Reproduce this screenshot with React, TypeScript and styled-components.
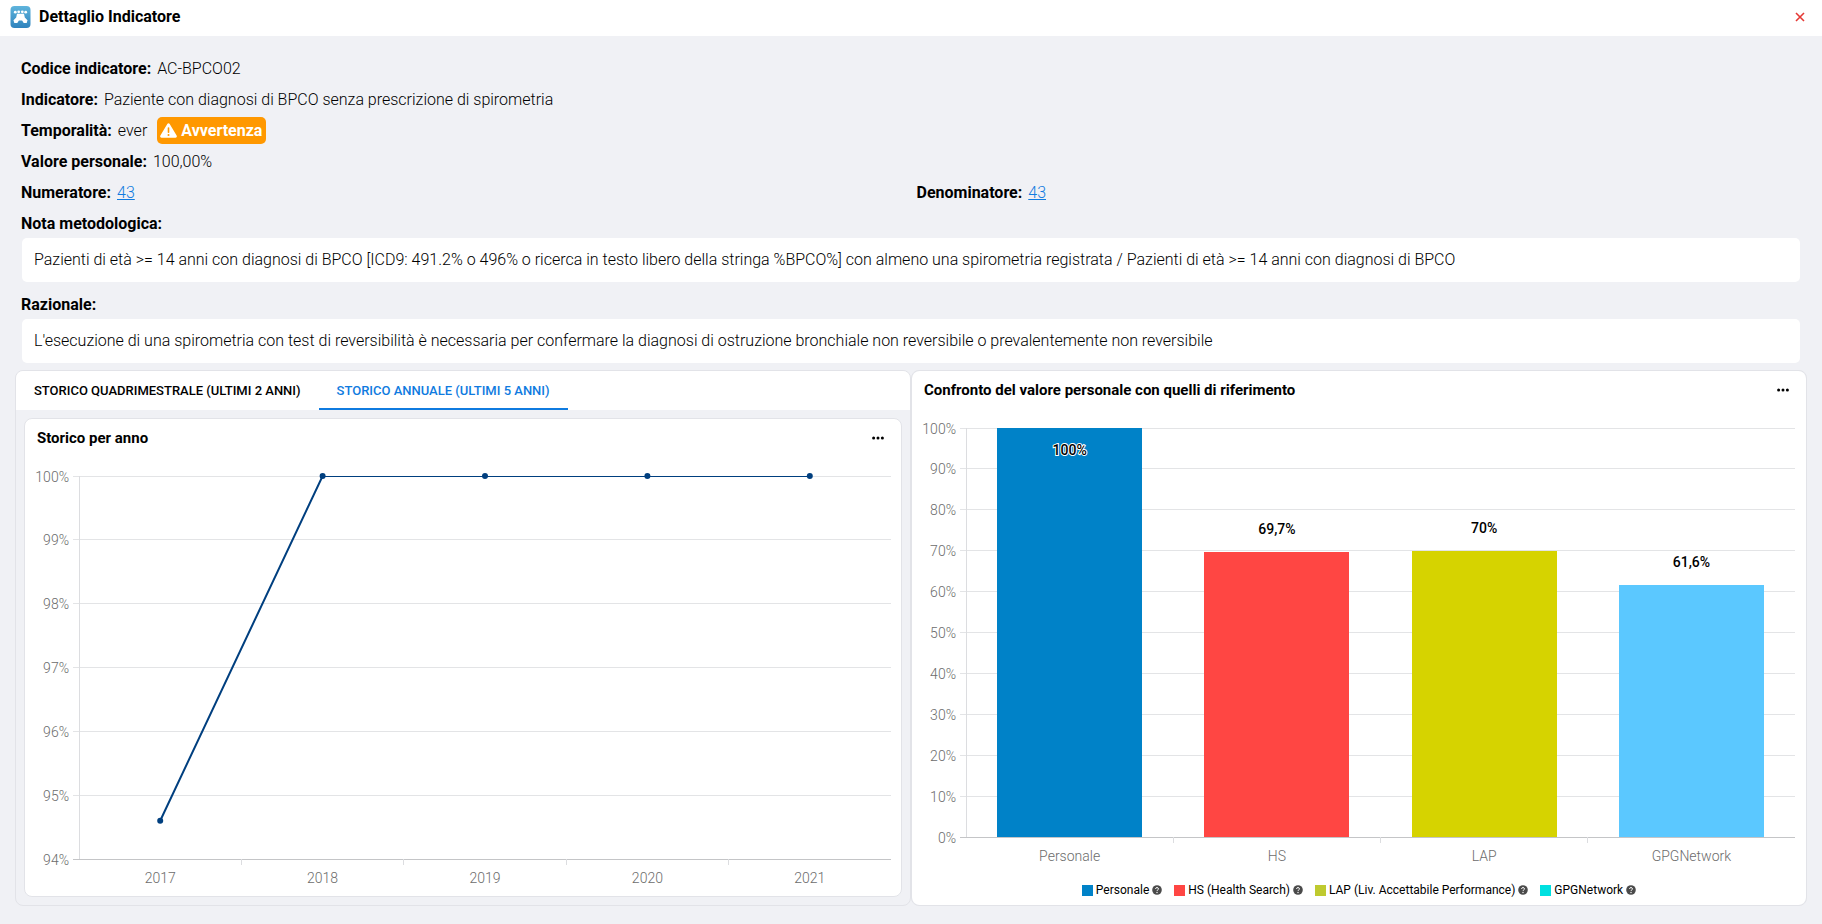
import React, { useLayoutEffect, useRef, useState } from "react";
import styled, { createGlobalStyle } from "styled-components";

const GlobalStyle = createGlobalStyle`
  *, *::before, *::after { box-sizing: border-box; }
  body {
    margin: 0;
    background: #f0f1f5;
    color: #000;
    font-family: Roboto, "Liberation Sans", sans-serif;
    font-size: 16px;
  }
`;

const Dialog = styled.section`
  display: flex;
  flex-direction: column;
  min-height: 100vh;
  background: #f0f1f5;
`;

const Header = styled.header`
  display: flex;
  align-items: center;
  gap: 8px;
  height: 36px;
  padding: 0 16px 3px 10px;
  background: #fff;
`;

const Title = styled.h1`
  flex: 1;
  margin: 0;
  font-size: 16px;
  font-weight: 700;
  line-height: 20px;
`;

const IconButton = styled.button<{ $color?: string }>`
  display: flex;
  padding: 0;
  border: 0;
  background: none;
  color: ${(p) => p.$color ?? "#000"};
  cursor: pointer;
`;

const Content = styled.main`
  display: flex;
  flex-direction: column;
  padding: 16px 15px;
`;

const Details = styled.div`
  display: flex;
  flex-direction: column;
  padding: 0 7px 0 6px;
`;

const Row = styled.div`
  display: grid;
  grid-template-columns: 1fr 1fr;
  column-gap: 12px;
`;

const Field = styled.div`
  display: flex;
  align-items: center;
  gap: 6px;
  height: 31px;
  padding-top: 2px;
  font-weight: 300;
`;

const Label = styled.span`
  font-weight: 700;
`;

const Link = styled.a`
  color: #0f7be0;
  text-decoration: underline;
`;

const Tag = styled.span`
  display: flex;
  align-items: center;
  gap: 4px;
  height: 27px;
  margin-left: 4px;
  padding: 0 4px 0 3px;
  border-radius: 5px;
  background: #ff9800;
  color: #fff;
  font-weight: 700;
`;

const Note = styled.p`
  margin: 0 0 6px 1px;
  padding: 10px 12px;
  border-radius: 5px;
  background: #fff;
  font-weight: 300;
  line-height: 24px;
`;

const Panels = styled.div`
  display: grid;
  grid-template-columns: 1fr 1fr;
  margin-top: 1px;
`;

const Panel = styled.section`
  display: flex;
  flex-direction: column;
  min-width: 0;
  border: 1px solid #e2e3e8;
  border-radius: 8px;
  overflow: hidden;
`;

const Tabs = styled.div`
  display: flex;
  height: 39px;
  background: #fff;
`;

const Tab = styled.button<{ $active?: boolean }>`
  padding: 2px 18px 0;
  border: 0;
  border-bottom: 2px solid ${(p) => (p.$active ? "#0f7be0" : "transparent")};
  background: none;
  color: ${(p) => (p.$active ? "#0f7be0" : "#000")};
  font-family: inherit;
  font-size: 13px;
  font-weight: 500;
  text-transform: uppercase;
  cursor: pointer;
`;

const TabBody = styled.div`
  padding: 8px;
`;

const Card = styled.div<{ $framed?: boolean }>`
  flex: 1;
  border: ${(p) => (p.$framed ? "1px solid #e2e3e8" : "0")};
  border-radius: 8px;
  background: #fff;
`;

const CardHeader = styled.div`
  display: flex;
  align-items: center;
  justify-content: space-between;
  height: 37px;
  padding: 0 17px 0 12px;
`;

const CardTitle = styled.h2`
  margin: 0;
  font-size: 15px;
  font-weight: 700;
`;

const ChartBox = styled.div<{ $height: number }>`
  height: ${(p) => p.$height}px;

  svg {
    display: block;
    width: 100%;
    height: 100%;
  }
`;

const AxisText = styled.text`
  fill: #6c6c6c;
  font-size: 14px;
  font-weight: 300;
`;

const ValueText = styled.text`
  fill: #000;
  stroke: #fff;
  stroke-width: 2px;
  paint-order: stroke;
  font-size: 14px;
  font-weight: 500;
  text-anchor: middle;
`;

const Legend = styled.ul`
  display: flex;
  justify-content: center;
  gap: 12px;
  margin: 0;
  padding: 0;
  list-style: none;
  font-size: 12px;
  font-weight: 400;
  line-height: 16px;
`;

const LegendItem = styled.li`
  display: flex;
  align-items: center;
  gap: 3px;
`;

const Swatch = styled.span<{ $color: string }>`
  width: 11px;
  height: 11px;
  background: ${(p) => p.$color};
`;

function useWidth() {
  const ref = useRef<HTMLDivElement>(null);
  const [width, setWidth] = useState(0);
  useLayoutEffect(() => {
    const node = ref.current;
    if (!node) return;
    const update = () => setWidth(node.clientWidth);
    update();
    const observer = new ResizeObserver(update);
    observer.observe(node);
    return () => observer.disconnect();
  }, []);
  return { ref, width };
}

interface Frame {
  left: number;
  right: number;
  top: number;
  bottom: number;
}

interface AxesProps {
  frame: Frame;
  levels: number[];
  categories: string[];
}

const yAt = (frame: Frame, levels: number[], value: number) => {
  const min = levels[0];
  const max = levels[levels.length - 1];
  return frame.bottom - ((value - min) / (max - min)) * (frame.bottom - frame.top);
};

/* Centre of the device pixel that holds a coordinate, so 1px strokes stay sharp. */
const snap = (value: number) => Math.floor(value) + 0.5;

function Axes({ frame, levels, categories }: AxesProps) {
  const step = (frame.right - frame.left) / categories.length;
  return (
    <g>
      {levels.map((level, i) => {
        const y = snap(yAt(frame, levels, level));
        return (
          <g key={level}>
            <line x1={frame.left - 6} x2={frame.right} y1={y} y2={y} stroke={i === 0 ? "#c4c5c7" : "#e3e4e6"} />
            <AxisText x={frame.left - 10} y={y + 5} textAnchor="end">
              {level}%
            </AxisText>
          </g>
        );
      })}
      <line x1={snap(frame.left)} x2={snap(frame.left)} y1={frame.top} y2={frame.bottom} stroke="#dcdde0" />
      {categories.map((name, i) => (
        <g key={name}>
          {i > 0 && (
            <line
              x1={snap(frame.left + step * i)}
              x2={snap(frame.left + step * i)}
              y1={frame.bottom}
              y2={frame.bottom + 6}
              stroke="#dcdde0"
            />
          )}
          <AxisText x={frame.left + step * (i + 0.5)} y={frame.bottom + 24} textAnchor="middle">
            {name}
          </AxisText>
        </g>
      ))}
    </g>
  );
}

const HISTORY = [
  { year: "2017", value: 94.6 },
  { year: "2018", value: 100 },
  { year: "2019", value: 100 },
  { year: "2020", value: 100 },
  { year: "2021", value: 100 },
];
const HISTORY_LEVELS = [94, 95, 96, 97, 98, 99, 100];

function HistoryChart() {
  const { ref, width } = useWidth();
  const frame: Frame = { left: 54, right: width - 10, top: 20, bottom: 403 };
  const step = (frame.right - frame.left) / HISTORY.length;
  const points = HISTORY.map((d, i) => ({
    x: frame.left + step * (i + 0.5),
    y: yAt(frame, HISTORY_LEVELS, d.value),
  }));
  return (
    <ChartBox ref={ref} $height={440}>
      {width > 0 && (
        <svg role="img" aria-label="Storico per anno">
          <defs>
            <clipPath id="history-plot">
              <rect x={frame.left} y={frame.top} width={frame.right - frame.left} height={frame.bottom - frame.top} />
            </clipPath>
          </defs>
          <Axes frame={frame} levels={HISTORY_LEVELS} categories={HISTORY.map((d) => d.year)} />
          <polyline
            points={points.map((p) => `${p.x},${p.y}`).join(" ")}
            fill="none"
            stroke="#003f7f"
            strokeWidth="2"
            strokeLinejoin="round"
            clipPath="url(#history-plot)"
          />
          {points.map((p) => (
            <circle key={p.x} cx={p.x} cy={p.y} r="3" fill="#003f7f" />
          ))}
        </svg>
      )}
    </ChartBox>
  );
}

const REFERENCES = [
  { name: "Personale", legend: "Personale", value: 100, text: "100%", color: "#0082c8", swatch: "#0082c8" },
  { name: "HS", legend: "HS (Health Search)", value: 69.7, text: "69,7%", color: "#ff4643", swatch: "#ff4643" },
  { name: "LAP", legend: "LAP (Liv. Accettabile Performance)", value: 70, text: "70%", color: "#d6d300", swatch: "#bfca2f" },
  { name: "GPGNetwork", legend: "GPGNetwork", value: 61.6, text: "61,6%", color: "#5bc8ff", swatch: "#00e0e0" },
];
const REFERENCE_LEVELS = [0, 10, 20, 30, 40, 50, 60, 70, 80, 90, 100];

function ReferenceChart() {
  const { ref, width } = useWidth();
  const frame: Frame = { left: 54, right: width - 11, top: 20, bottom: 429 };
  const step = (frame.right - frame.left) / REFERENCES.length;
  return (
    <ChartBox ref={ref} $height={474}>
      {width > 0 && (
        <svg role="img" aria-label="Confronto del valore personale con quelli di riferimento">
          <Axes frame={frame} levels={REFERENCE_LEVELS} categories={REFERENCES.map((d) => d.name)} />
          {REFERENCES.map((d, i) => {
            const y = yAt(frame, REFERENCE_LEVELS, d.value);
            const center = frame.left + step * (i + 0.5);
            const labelY = d.value === 100 ? y + 27 : y - 18;
            return (
              <g key={d.name}>
                <rect
                  x={center - step * 0.35}
                  y={y}
                  width={step * 0.7}
                  height={frame.bottom - y}
                  fill={d.color}
                  shapeRendering="crispEdges"
                />
                <ValueText x={center} y={labelY}>
                  {d.text}
                </ValueText>
              </g>
            );
          })}
        </svg>
      )}
    </ChartBox>
  );
}

const LogoIcon = () => (
  <svg width="21" height="22" viewBox="0 0 21 22" aria-hidden="true">
    <defs>
      <linearGradient id="logo-fill" x1="0" y1="0" x2="0" y2="1">
        <stop offset="0" stopColor="#5fb4dc" />
        <stop offset="1" stopColor="#2f83bd" />
      </linearGradient>
    </defs>
    <rect x="0.5" y="0" width="20" height="22" rx="4" fill="url(#logo-fill)" />
    <g fill="#fff">
      <circle cx="5.3" cy="6.2" r="1.4" />
      <circle cx="8.7" cy="5.8" r="1.4" />
      <circle cx="12.3" cy="5.800" r="1.4" />
      <circle cx="15.7" cy="6.2" r="1.4" />
      <path d="M7 7.800h7l.8 3.700 2.700 2.700-.8 2.800h-3l-1.600-2.600h-3.200l-1.600 2.600h-3l-.8-2.800 2.700-2.700z" />
    </g>
  </svg>
);

const CloseIcon = () => (
  <svg width="12" height="12" viewBox="0 0 12 12" aria-hidden="true">
    <path d="M2 2l8 8M10 2l-8 8" stroke="currentColor" strokeWidth="1.6" />
  </svg>
);

const MoreIcon = () => (
  <svg width="12" height="4" viewBox="0 0 12 4" fill="currentColor" aria-hidden="true">
    <circle cx="1.6" cy="2" r="1.5" />
    <circle cx="6" cy="2" r="1.5" />
    <circle cx="10.4" cy="2" r="1.5" />
  </svg>
);

const WarningIcon = () => (
  <svg width="17" height="15" viewBox="0 0 17 15" aria-hidden="true">
    <path
      d="M7.300.9a1.400 1.400 0 0 1 2.400 0l6.900 11.600a1.400 1.400 0 0 1-1.200 2.200H1.600a1.400 1.400 0 0 1-1.200-2.200z"
      fill="#fff"
    />
    <path d="M8.500 5v4.300" stroke="#ff9800" strokeWidth="1.6" strokeLinecap="round" />
    <circle cx="8.5" cy="12" r="1" fill="#ff9800" />
  </svg>
);

const HelpIcon = () => (
  <svg width="10" height="10" viewBox="0 0 10 10" aria-hidden="true">
    <circle cx="5" cy="5" r="4.8" fill="#4a4a4a" />
    <path d="M3.500 3.900C3.500 2.100 6.500 2.100 6.500 3.900C6.500 4.900 5 4.900 5 6" fill="none" stroke="#fff" />
    <circle cx="5" cy="7.5" r="0.7" fill="#fff" />
  </svg>
);

export default function App() {
  return (
    <>
      <GlobalStyle />
      <Dialog aria-labelledby="dialog-title">
        <Header>
          <LogoIcon />
          <Title id="dialog-title">Dettaglio Indicatore</Title>
          <IconButton type="button" aria-label="Chiudi" $color="#e53935">
            <CloseIcon />
          </IconButton>
        </Header>
        <Content>
          <Details>
            <Field>
              <Label>Codice indicatore:</Label>
              <span>AC-BPCO02</span>
            </Field>
            <Field>
              <Label>Indicatore:</Label>
              <span>Paziente con diagnosi di BPCO senza prescrizione di spirometria</span>
            </Field>
            <Field>
              <Label>Temporalità:</Label>
              <span>ever</span>
              <Tag>
                <WarningIcon />
                Avvertenza
              </Tag>
            </Field>
            <Field>
              <Label>Valore personale:</Label>
              <span>100,00%</span>
            </Field>
            <Row>
              <Field>
                <Label>Numeratore:</Label>
                <Link href="#numeratore">43</Link>
              </Field>
              <Field>
                <Label>Denominatore:</Label>
                <Link href="#denominatore">43</Link>
              </Field>
            </Row>
            <Field>
              <Label>Nota metodologica:</Label>
            </Field>
            <Note>
              Pazienti di età &gt;= 14 anni con diagnosi di BPCO [ICD9: 491.2% o 496% o ricerca in testo libero della
              stringa %BPCO%] con almeno una spirometria registrata / Pazienti di età &gt;= 14 anni con diagnosi di BPCO
            </Note>
            <Field>
              <Label>Razionale:</Label>
            </Field>
            <Note>
              L'esecuzione di una spirometria con test di reversibilità è necessaria per confermare la diagnosi di
              ostruzione bronchiale non reversibile o prevalentemente non reversibile
            </Note>
          </Details>
          <Panels>
            <Panel>
              <Tabs role="tablist">
                <Tab type="button" role="tab" aria-selected={false}>
                  Storico quadrimestrale (ultimi 2 anni)
                </Tab>
                <Tab type="button" role="tab" aria-selected $active>
                  Storico annuale (ultimi 5 anni)
                </Tab>
              </Tabs>
              <TabBody role="tabpanel">
                <Card $framed>
                  <CardHeader>
                    <CardTitle>Storico per anno</CardTitle>
                    <IconButton type="button" aria-label="Opzioni storico">
                      <MoreIcon />
                    </IconButton>
                  </CardHeader>
                  <HistoryChart />
                </Card>
              </TabBody>
            </Panel>
            <Panel>
              <Card>
                <CardHeader>
                  <CardTitle>Confronto del valore personale con quelli di riferimento</CardTitle>
                  <IconButton type="button" aria-label="Opzioni confronto">
                    <MoreIcon />
                  </IconButton>
                </CardHeader>
                <ReferenceChart />
                <Legend>
                  {REFERENCES.map((d) => (
                    <LegendItem key={d.name}>
                      <Swatch $color={d.swatch} />
                      {d.legend}
                      <HelpIcon />
                    </LegendItem>
                  ))}
                </Legend>
              </Card>
            </Panel>
          </Panels>
        </Content>
      </Dialog>
    </>
  );
}
